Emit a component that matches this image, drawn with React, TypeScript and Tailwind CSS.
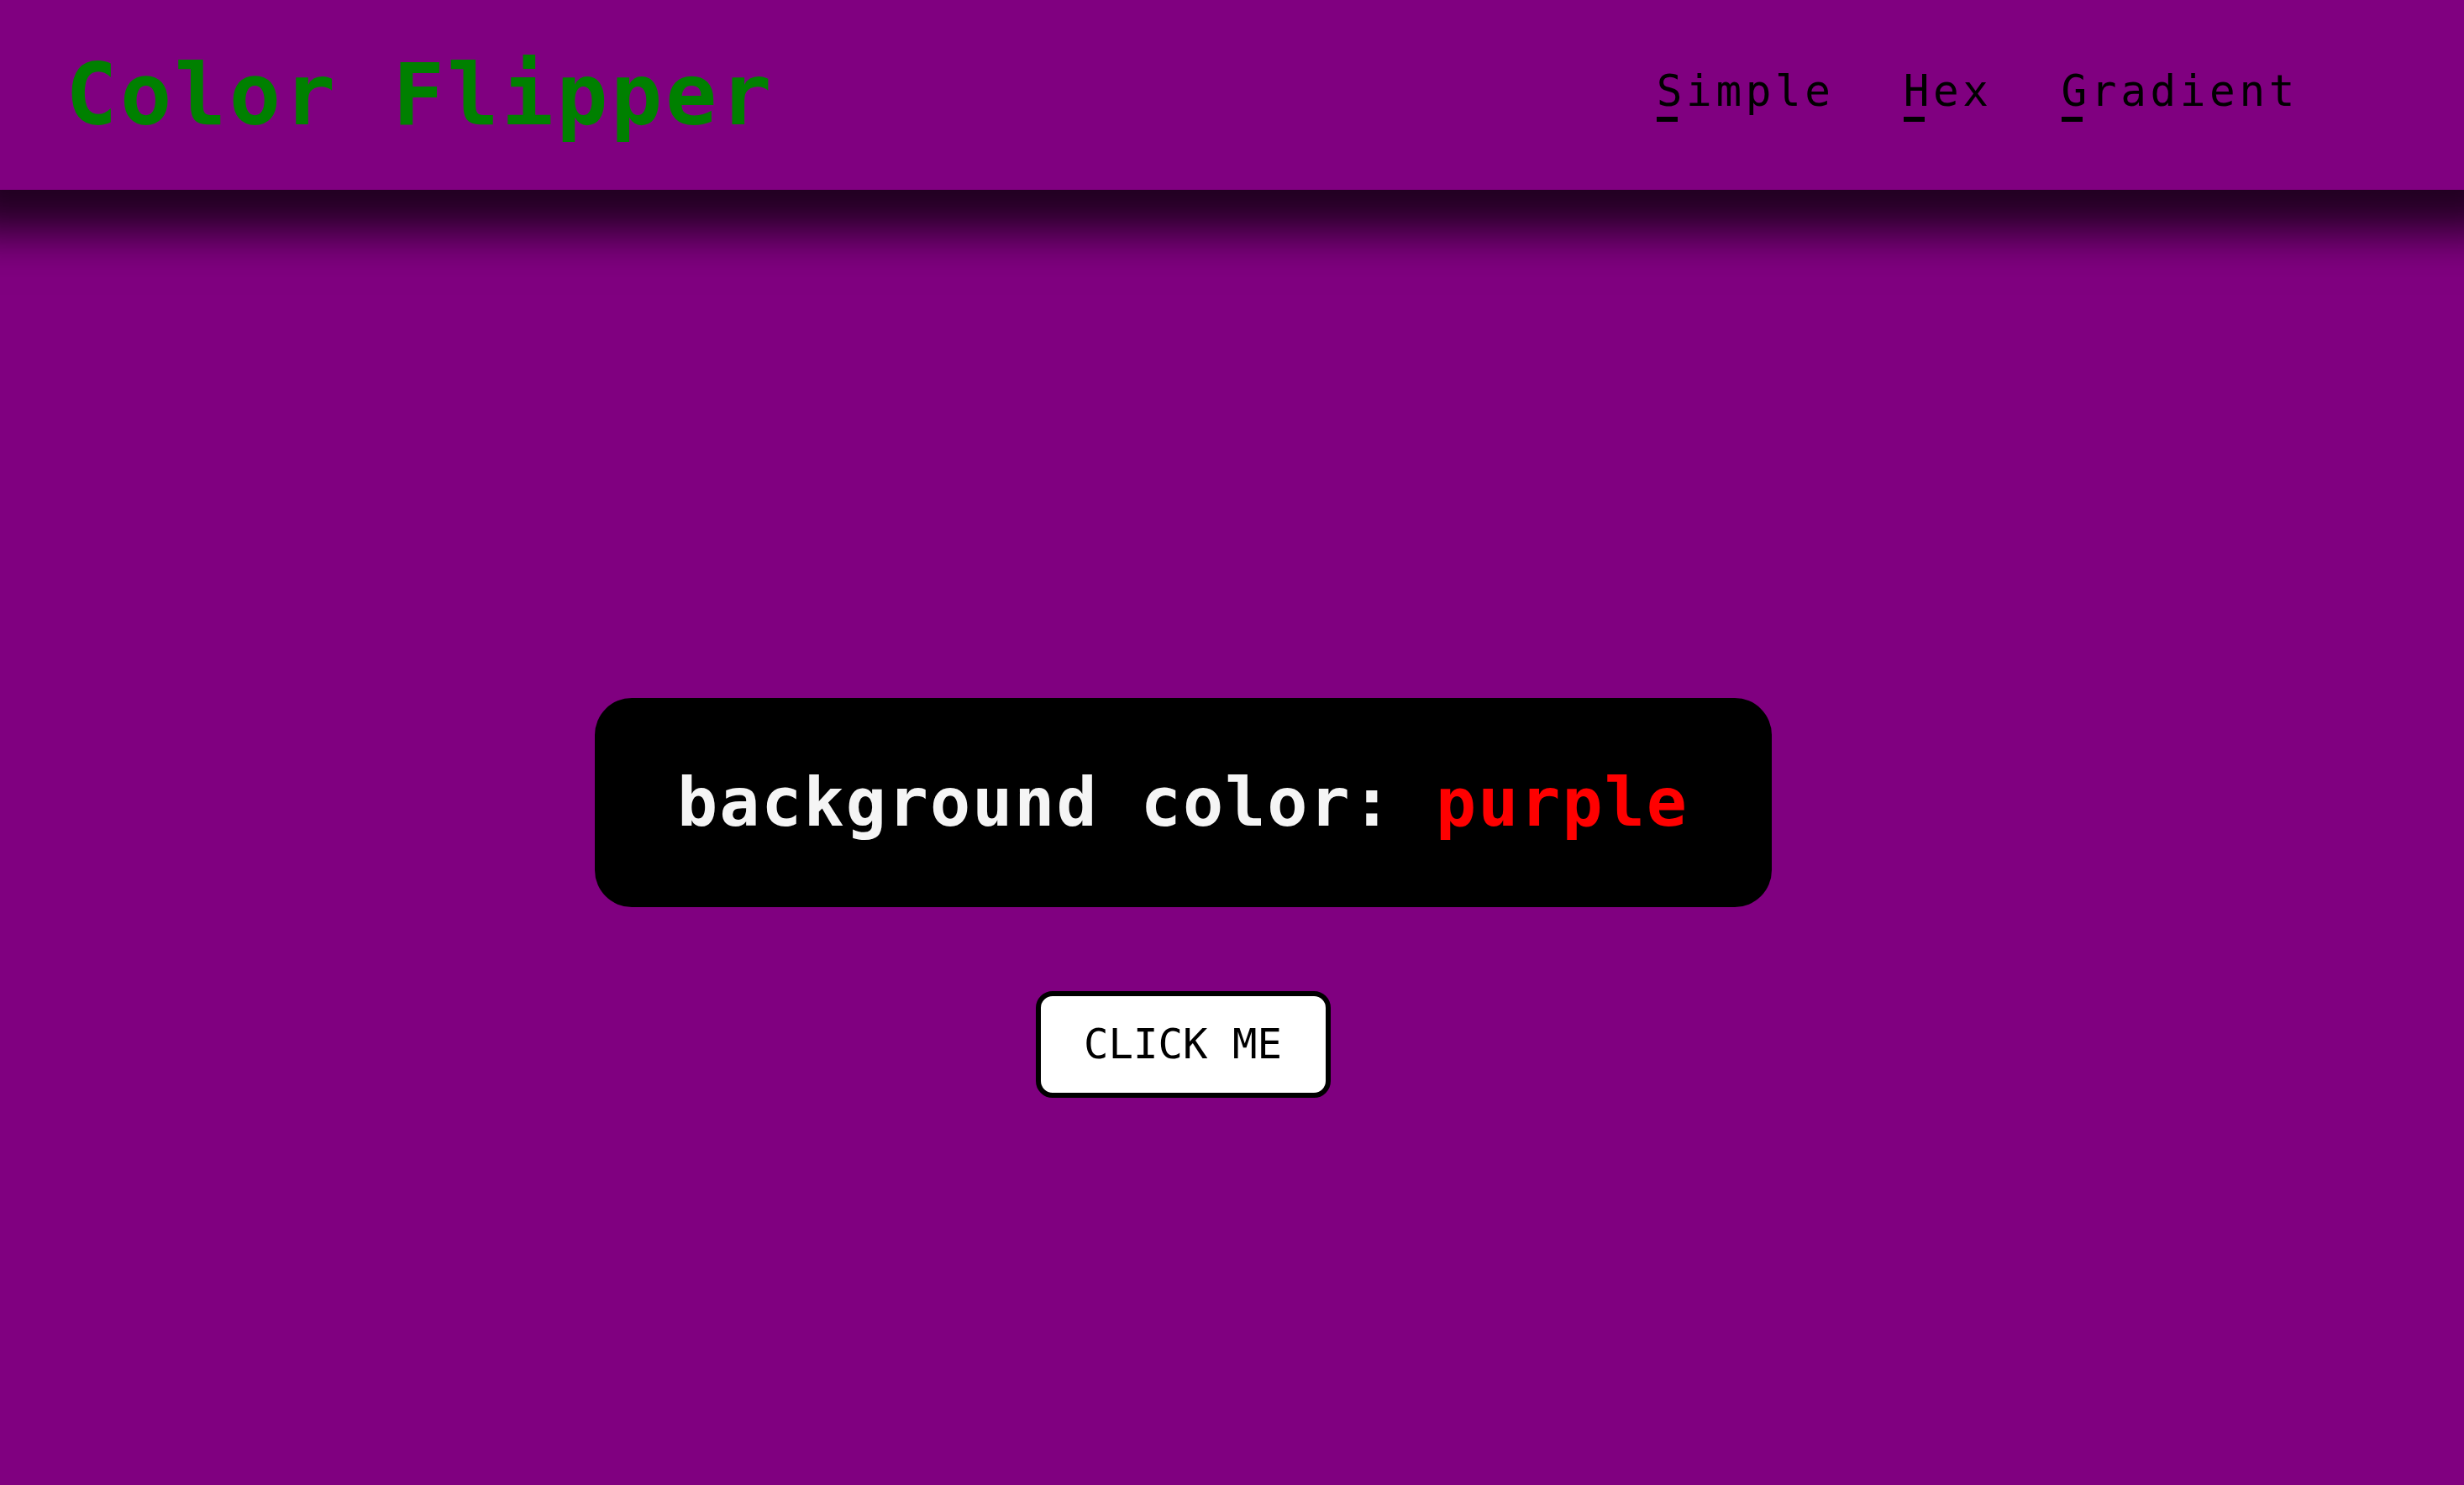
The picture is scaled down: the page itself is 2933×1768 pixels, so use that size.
export default function App() {
  const links = ["Simple", "Hex", "Gradient"];
  return (
    <div className="min-h-screen overflow-hidden bg-[#800080] font-['DejaVu_Sans_Mono',monospace]">
      <header className="relative z-10 flex h-[226px] items-center justify-between bg-[#800080] pl-[78px] pr-[197px] shadow-[0_0_50px_50px_rgba(0,0,0,0.75)]">
        <h1 className="text-[102px] font-bold leading-none tracking-[3.5px] text-[#008000]">Color Flipper</h1>
        <nav className="mb-[10px] flex gap-[82px] text-[51px] leading-none tracking-[4.6px] text-black">
          {links.map((l) => (
            <a key={l} href="#" className="block">
              <span className="relative">
                {l[0]}
                <span className="absolute left-0 top-[calc(100%+1px)] h-[6px] w-[25px] bg-black" />
              </span>
              {l.slice(1)}
            </a>
          ))}
        </nav>
      </header>
      <main className="flex flex-col items-center pr-[117px] pt-[605px]">
        <div className="flex h-[249px] w-[1401px] items-center justify-center rounded-[44px] bg-black">
          <h2 className="text-[80px] font-bold leading-none tracking-[2px] text-[#f5f5f5]">
            background color: <span className="text-[#ff0000]">purple</span>
          </h2>
        </div>
        <button className="mt-[100px] h-[127px] w-[351px] rounded-[20px] border-[6px] border-black bg-white text-[49px] leading-none text-black">
          CLICK ME
        </button>
      </main>
    </div>
  );
}
